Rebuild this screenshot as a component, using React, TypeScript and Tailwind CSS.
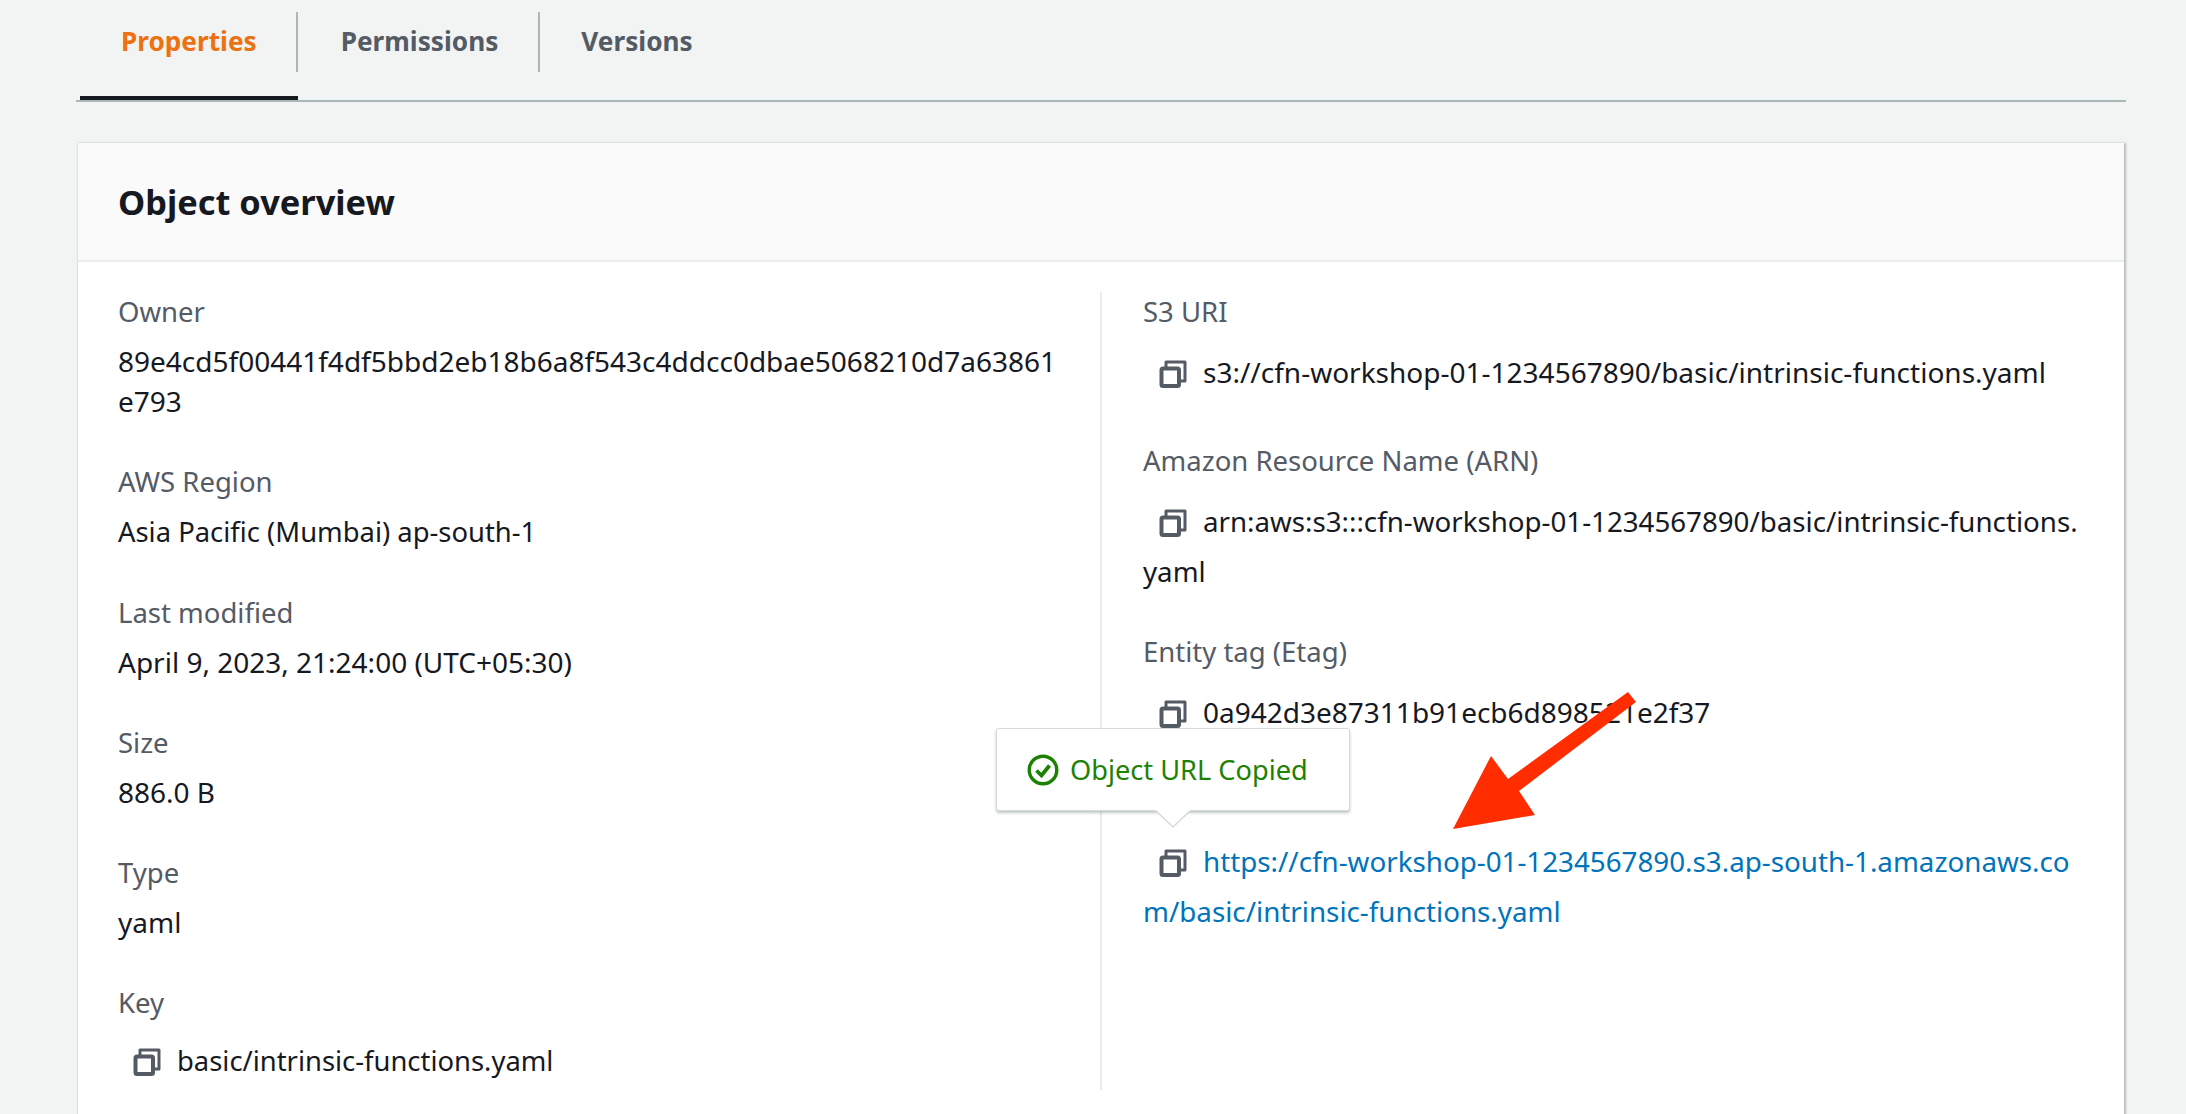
import React from "react";

const CopyIcon: React.FC = () => (
  <svg viewBox="0 0 28 28" className="w-[28px] h-[28px] inline-block align-[-5px]" fill="none" stroke="#545b64" strokeLinejoin="round">
    <path d="M7 7V2H26V21H21" strokeWidth="3" />
    <rect x="2.5" y="8.5" width="17.5" height="17.5" rx="1.5" strokeWidth="4" />
  </svg>
);

const Field: React.FC<{ label: string; value: React.ReactNode; className?: string }> = ({ label, value, className = "" }) => (
  <div className={className}>
    <div className="text-[#545b64] text-[27.5px] leading-[40px]">{label}</div>
    <div className="mt-[9px] leading-[40px] text-[#16191f] break-all">{value}</div>
  </div>
);

const CopyField: React.FC<{ label: string; value: React.ReactNode; link?: boolean; className?: string; valueClassName?: string }> = ({
  label,
  value,
  link = false,
  className = "",
  valueClassName = "",
}) => (
  <div className={className}>
    <div className="text-[#545b64] text-[27.5px] leading-[40px]">{label}</div>
    <div className={`mt-[15px] leading-[50px] whitespace-nowrap ${link ? "text-[#0073bb]" : "text-[#16191f]"} ${valueClassName}`}>
      <span className="inline-block w-[60px] pl-[16px]">
        <CopyIcon />
      </span>
      {value}
    </div>
  </div>
);

const tabs = ["Properties", "Permissions", "Versions"];

export default function App() {
  return (
    <div className="relative h-[1114px] w-[2186px] overflow-hidden bg-[#f2f3f3] text-[28px] font-['Noto_Sans',sans-serif]">
      <div className="ml-[76px] w-[2050px] h-[102px] border-b-2 border-[#aab7b8] flex">
        {tabs.map((tab, i) => (
          <div key={tab} className={`h-[100px] pt-[12px] ${i === 0 ? "ml-[4px] border-b-4 border-[#16191f]" : ""}`}>
            <div
              className={`h-[60px] flex items-center text-[26.2px] font-bold ${i === 0 ? "pl-[41px] pr-[39px]" : i === 1 ? "pl-[43px] pr-[40px]" : "pl-[41px] pr-[41px]"} ${i < 2 ? "border-r-2 border-[#aab7b8]" : ""} ${i === 0 ? "text-[#ec7211]" : "text-[#545b64]"}`}
            >
              {tab}
            </div>
          </div>
        ))}
      </div>

      <div className="ml-[78px] mt-[41px] w-[2046px] h-[980px] bg-white shadow-[1px_1px_2px_1px_rgba(0,28,36,0.25)]">
        <div className="h-[119px] bg-[#fafafa] border-b-2 border-[#eaeded] flex items-center pl-[40px] text-[34.4px] font-bold text-[#16191f]">
          Object overview
        </div>
        <div className="flex pt-[30px] pl-[40px]">
          <div className="w-[984px] h-[798px] pr-[40px] border-r-2 border-[#eaeded]">
            <Field label="Owner" value="89e4cd5f00441f4df5bbd2eb18b6a8f543c4ddcc0dbae5068210d7a63861e793" />
            <Field className="mt-[41px]" label="AWS Region" value={<span className="text-[27.4px]">Asia Pacific (Mumbai) ap-south-1</span>} />
            <Field className="mt-[41px]" label="Last modified" value="April 9, 2023, 21:24:00 (UTC+05:30)" />
            <Field className="mt-[41px]" label="Size" value="886.0 B" />
            <Field className="mt-[41px]" label="Type" value="yaml" />
            <Field
              className="mt-[41px]"
              label="Key"
              value={
                <span className="inline-block mt-[9px] text-[27.4px]">
                  <span className="inline-block w-[59px] pl-[15px]">
                    <CopyIcon />
                  </span>
                  basic/intrinsic-functions.yaml
                </span>
              }
            />
          </div>
          <div className="w-[950px] pl-[41px]">
            <CopyField label="S3 URI" value="s3://cfn-workshop-01-1234567890/basic/intrinsic-functions.yaml" />
            <CopyField
              className="mt-[44px]"
              valueClassName="text-[27.7px]"
              label="Amazon Resource Name (ARN)"
              value={
                <>
                  arn:aws:s3:::cfn-workshop-01-1234567890/basic/intrinsic-functions.
                  <br />
                  yaml
                </>
              }
            />
            <CopyField className="mt-[36px]" label="Entity tag (Etag)" value="0a942d3e87311b91ecb6d898521e2f37" />
            <CopyField
              className="mt-[43px]"
              valueClassName="text-[27.75px] mt-[16px]"
              label="Object URL"
              link
              value={
                <>
                  https://cfn-workshop-01-1234567890.s3.ap-south-1.amazonaws.co
                  <br />
                  m/basic/intrinsic-functions.yaml
                </>
              }
            />
          </div>
        </div>
      </div>

      {/* copied popover */}
      <div className="absolute left-[996px] top-[728px] w-[354px] h-[83px] bg-white rounded-[3px] border border-[#d5dbdb] shadow-[0_2px_3px_rgba(0,28,36,0.25)] flex items-center pl-[30px] text-[27.2px] text-[#1d8102]">
        <svg viewBox="0 0 32 32" className="w-[32px] h-[32px] mr-[11px]" fill="none" stroke="#1d8102" strokeWidth="3.4">
          <circle cx="16" cy="16" r="13.8" />
          <path d="M9.5 16.5l5 5 8-10" strokeWidth="3.8" />
        </svg>
        <span className="pt-[2px]">Object URL Copied</span>
        <svg viewBox="0 0 36 18" className="absolute left-[158px] top-[81px] w-[36px] h-[18px]">
          <path d="M0 0L18 17L36 0Z" fill="#ffffff" />
          <path d="M0 0L18 17L36 0" fill="none" stroke="#d5dbdb" strokeWidth="1.5" />
        </svg>
      </div>

      {/* annotation arrow */}
      <svg viewBox="0 0 2186 1114" className="absolute left-0 top-0 w-[2186px] h-[1114px] pointer-events-none">
        <polygon points="1628,692 1636,702 1519,791 1535,815 1453,829 1491,756 1508,779" fill="#ff2d00" />
      </svg>
    </div>
  );
}
